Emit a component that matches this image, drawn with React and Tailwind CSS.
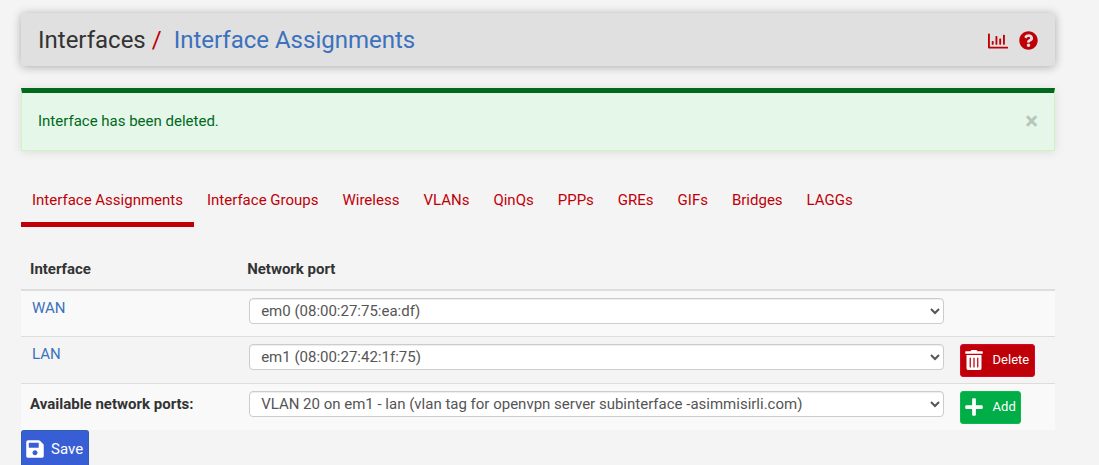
import { FaRegChartBar, FaQuestionCircle, FaTrashAlt, FaPlus, FaSave } from 'react-icons/fa';

const tabs = ['Interface Assignments', 'Interface Groups', 'Wireless', 'VLANs', 'QinQs', 'PPPs', 'GREs', 'GIFs', 'Bridges', 'LAGGs'];

const rows = [
  { name: 'WAN', port: 'em0 (08:00:27:75:ea:df)' },
  { name: 'LAN', port: 'em1 (08:00:27:42:1f:75)', removable: true },
];

function PortSelect({ label, value }) {
  return (
    <select
      aria-label={label}
      defaultValue={value}
      className="block h-[26px] w-full rounded-sm border border-[#cccccc] bg-white pl-[7px] text-[15px] text-[#555555] shadow-[inset_0_1px_1px_rgba(0,0,0,0.075)]"
    >
      <option>{value}</option>
    </select>
  );
}

function Header() {
  return (
    <header className="flex h-[53px] items-center justify-between rounded-sm bg-[#e0e0e0] px-[17px] shadow-[0_1px_10px_rgba(0,0,0,0.3)]">
      <h1 className="flex text-2xl">
        <span>Interfaces</span>
        <span className="ml-[6px] text-[#c00008]">/</span>
        <a href="#assignments" className="ml-3 text-[#3b71bd]">Interface Assignments</a>
      </h1>
      <div className="flex items-center gap-[11px] pt-[2px] text-[#c00008]">
        <a href="#status" aria-label="Status"><FaRegChartBar size={20} /></a>
        <a href="#help" aria-label="Help"><FaQuestionCircle size={19} /></a>
      </div>
    </header>
  );
}

export default function App() {
  return (
    <div className="min-h-screen bg-[#f4f4f4] pt-[13px] pr-[44px] pl-[21px] font-[Roboto,sans-serif] text-[15px] leading-5 text-[#333333]">
      <Header />
      <div role="alert" className="mt-[22px] flex h-[63px] items-center justify-between border border-t-[5px] border-[#d0f3c0] border-t-[#00691c] bg-[#e5f7e9] px-4 pb-px text-[#00691c] shadow-[0_1px_10px_rgba(0,0,0,0.1)]">
        <span className="pb-px">Interface has been deleted.</span>
        <button type="button" aria-label="Close" className="text-2xl leading-5 font-bold text-[#b7c6ba]">×</button>
      </div>
      <nav className="mt-[39px] flex">
        {tabs.map((tab, i) => (
          <a
            key={tab}
            href="#tab"
            className={i === 0
              ? 'mr-[2px] border-b-[5px] border-[#c00008] px-[11px] pb-3 text-[#c00008]'
              : 'mr-[2px] border-b-[5px] border-transparent px-[11px] pb-3 text-[#c00008]'}
          >
            {tab}
          </a>
        ))}
      </nav>
      <table className="mt-[21px] w-full table-fixed border-collapse text-left">
        <thead>
          <tr className="h-[42px] border-b-2 border-[#dddddd]">
            <th className="w-[21%] px-[9px]">Interface</th>
            <th className="w-[69%] px-[9px]">Network port</th>
            <th aria-label="Actions" />
          </tr>
        </thead>
        <tbody>
          {rows.map((row) => (
            <tr key={row.name} className="h-[47px] border-b border-[#dddddd] first:h-[46px] odd:bg-[#f9f9f9]">
              <td className="pt-[7px] pl-[11px] align-top"><a href="#interface" className="text-[#3b71bd]">{row.name}</a></td>
              <td className="pt-[7px] pr-2 pl-[11px] align-top"><PortSelect label={row.name + ' network port'} value={row.port} /></td>
              <td className="pt-[7px] pl-2 align-top">
                {row.removable && (
                  <button type="button" className="flex h-[33px] items-center gap-[10px] rounded-[3px] border border-[#d8062c] bg-[#c00008] pr-[5px] pl-1 text-[13px] text-white">
                    <FaTrashAlt size={20} className="w-[18px]" />
                    Delete
                  </button>
                )}
              </td>
            </tr>
          ))}
          <tr className="h-[47px] bg-[#f9f9f9]">
            <th className="px-[9px] pt-[10px] align-top">Available network ports:</th>
            <td className="pt-[7px] pr-2 pl-[11px] align-top">
              <PortSelect label="Available network ports" value="VLAN 20 on em1 - lan (vlan tag for openvpn server subinterface -asimmisirli.com)" />
            </td>
            <td className="pt-[7px] pl-2 align-top">
              <button type="button" className="flex h-[33px] items-center gap-[10px] rounded-[3px] border border-[#08bb4c] bg-[#00ad46] px-1 text-[13px] text-white">
                <FaPlus size={20} className="w-[18px]" />
                Add
              </button>
            </td>
          </tr>
        </tbody>
      </table>
      <button type="button" className="flex h-[35px] items-center gap-[7px] rounded-t-[3px] border border-b-0 border-[#3160ad] bg-[#385ed6] pr-[5px] pl-1 pt-[2px] text-[15px] text-white">
        <FaSave size={20} className="w-[18px]" />
        Save
      </button>
    </div>
  );
}
